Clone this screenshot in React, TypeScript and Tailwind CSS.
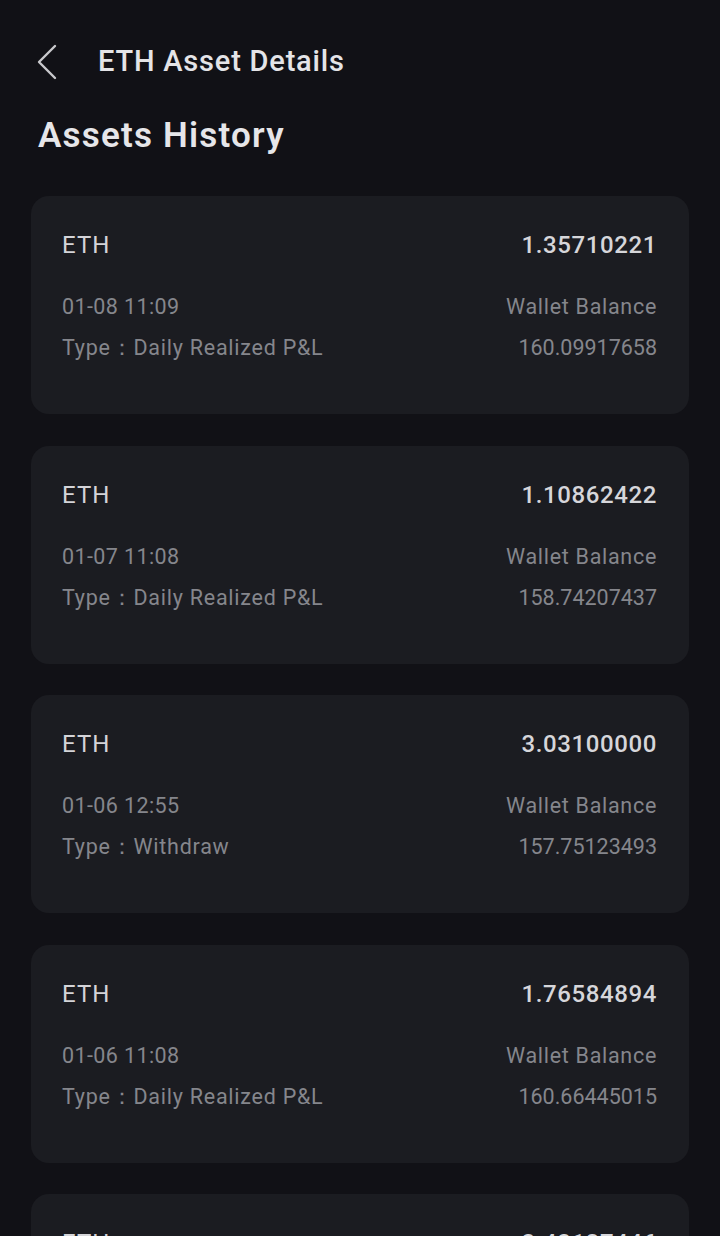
import React from "react";

type Entry = {
  coin: string;
  amount: string;
  time: string;
  type: string;
  balance: string;
};

const entries: Entry[] = [
  { coin: "ETH", amount: "1.35710221", time: "01-08 11:09", type: "Daily Realized P&L", balance: "160.09917658" },
  { coin: "ETH", amount: "1.10862422", time: "01-07 11:08", type: "Daily Realized P&L", balance: "158.74207437" },
  { coin: "ETH", amount: "3.03100000", time: "01-06 12:55", type: "Withdraw", balance: "157.75123493" },
  { coin: "ETH", amount: "1.76584894", time: "01-06 11:08", type: "Daily Realized P&L", balance: "160.66445015" },
  { coin: "ETH", amount: "2.42137446", time: "01-05 11:08", type: "Daily Realized P&L", balance: "158.89860121" },
];

const HistoryCard = ({ item }: { item: Entry }) => {
  return (
    <div className="h-[218px] shrink-0 rounded-[18px] bg-[#1b1c21] px-[31px] pt-[33px]">
      <div className="flex items-center justify-between h-[32px]">
        <span className="text-[24px] text-[#d4d4d8] tracking-[1px]">{item.coin}</span>
        <span className="text-[24px] font-medium text-[#d6d6da] tracking-[0.6px] pr-[1px]">{item.amount}</span>
      </div>
      <div className="mt-[31px] flex justify-between text-[21.5px] text-[#85868c] leading-[30px] pr-[1px]">
        <div className="flex flex-col gap-[11px]">
          <span className="tracking-[0.4px]">{item.time}</span>
          <span className="tracking-[0.75px]">Type：{item.type}</span>
        </div>
        <div className="flex flex-col gap-[11px] items-end">
          <span className="tracking-[0.7px]">Wallet Balance</span>
          <span>{item.balance}</span>
        </div>
      </div>
    </div>
  );
};

export default function App() {
  return (
    <div
      className="w-[720px] h-[1236px] overflow-hidden bg-[#111116]"
      style={{ fontFamily: "Roboto, 'Noto Sans', sans-serif" }}
    >
      {/* Top bar */}
      <div className="pt-[31px] pl-[36px]">
        <div className="flex items-center h-[62px]">
          <svg width="22" height="36" viewBox="0 0 22 36" fill="none" className="shrink-0">
            <path d="M19 2 L3 18 L19 34" stroke="#c9c9cd" strokeWidth="2.4" strokeLinecap="round" strokeLinejoin="round" />
          </svg>
          <span className="ml-[40px] text-[29px] font-medium text-[#e4e4e7] tracking-[0.8px]">ETH Asset Details</span>
        </div>
      </div>

      <h1 className="mt-[21px] pl-[38px] text-[35px] font-semibold text-[#e6e6e9] leading-[44px] tracking-[1.2px]">Assets History</h1>

      {/* History list */}
      <div className="mt-[38px] px-[31px] flex flex-col gap-[31.5px]">
        {entries.map((item, i) => (
          <HistoryCard key={i} item={item} />
        ))}
      </div>
    </div>
  );
}
